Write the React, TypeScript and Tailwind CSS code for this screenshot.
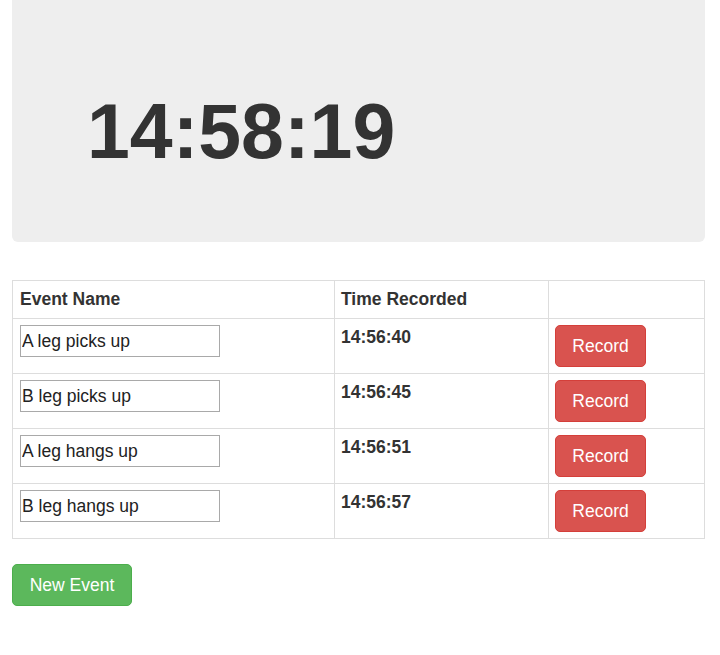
import { useState } from "react"

const events = [
  { name: "A leg picks up", time: "14:56:40" },
  { name: "B leg picks up", time: "14:56:45" },
  { name: "A leg hangs up", time: "14:56:51" },
  { name: "B leg hangs up", time: "14:56:57" },
]

export default function App() {
  const [rows, setRows] = useState(events)

  return (
    <div className="min-h-[655px] bg-white pl-3 pr-[15px] text-[#333] [font-family:'Liberation_Sans',Arial,sans-serif]">
      {/* clock */}
      <div className="h-[242px] rounded-b-[6px] bg-[#eeeeee] pl-[75px] pt-[87px]">
        <h1 className="text-[77px] leading-[88px] font-bold">14:58:19</h1>
      </div>

      <table className="mt-[38px] w-full border-collapse text-[17.5px] leading-[21px]">
        <thead>
          <tr>
            <th className="w-[322px] border border-[#dddddd] px-[7px] py-2 text-left font-bold">Event Name</th>
            <th className="w-[214px] border border-[#dddddd] px-[6px] py-2 text-left font-bold">Time Recorded</th>
            <th className="border border-[#dddddd] px-[6px] py-2"></th>
          </tr>
        </thead>
        <tbody>
          {rows.map((row, i) => (
            <tr key={i} className="h-[55px]">
              <td className="border border-[#dddddd] px-[7px] pt-[6px] align-top">
                <input
                  className="h-[32px] w-[200px] border border-[#a9a9a9] px-[1px] text-[17.5px] text-[#222] outline-none"
                  value={row.name}
                  onChange={(e) => setRows(rows.map((r, j) => (j === i ? { ...r, name: e.target.value } : r)))}
                />
              </td>
              <td className="border border-[#dddddd] px-[6px] pt-2 align-top font-bold">{row.time}</td>
              <td className="border border-[#dddddd] px-[6px] pt-[6px] align-top">
                <button className="h-[42px] w-[91px] rounded-[5px] border border-[#d43f3a] bg-[#d9534f] text-white">
                  Record
                </button>
              </td>
            </tr>
          ))}
        </tbody>
      </table>

      <button className="mt-[25px] h-[42px] w-[120px] rounded-[5px] border border-[#4cae4c] bg-[#5cb85c] text-[17.5px] text-white">
        New Event
      </button>
    </div>
  )
}
